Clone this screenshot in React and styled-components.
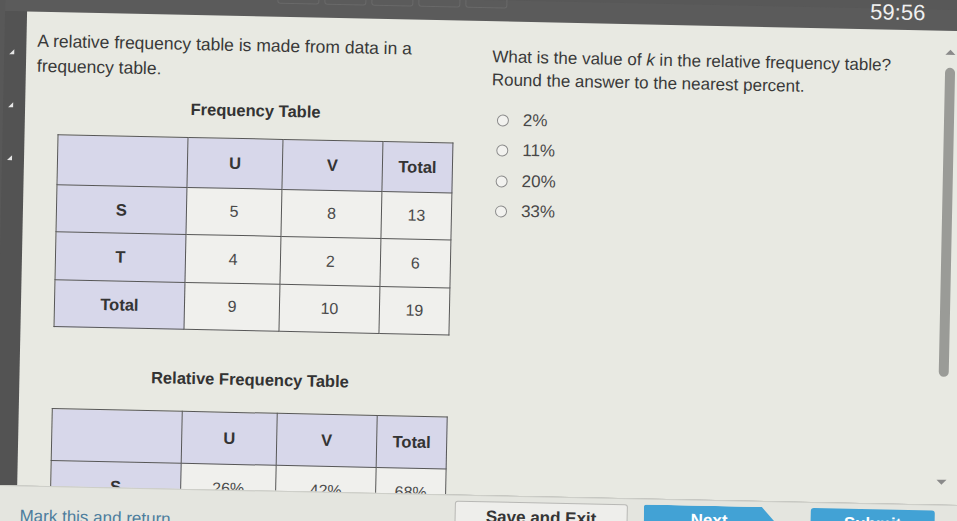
import React from "react";
import styled, { createGlobalStyle } from "styled-components";

const Global = createGlobalStyle`
  html, body { margin: 0; padding: 0; background: #585858; }
  body { font-family: "Liberation Sans", Arial, sans-serif; }
`;

/* Window that clips the slightly tilted exam screen */
const Viewport = styled.div`
  width: 957px;
  height: 521px;
  overflow: hidden;
  background: #585858;
`;

const Screen = styled.div`
  width: 967px;
  height: 541px;
  display: flex;
  flex-direction: column;
  transform: rotate(1.2deg);
  transform-origin: 478px 260px;
`;

const TopBar = styled.div`
  height: 21px;
  flex: none;
  display: flex;
  align-items: flex-start;
  padding: 0 47px 0 272px;
  background: #5b5b5b;
`;

const Tabs = styled.div`
  display: flex;
  gap: 5px;
  margin-top: -6px;
`;

const Tab = styled.div`
  width: 40px;
  height: 12px;
  border: 1px solid #696969;
  border-radius: 3px;
`;

const Timer = styled.div`
  margin: -7px 0 0 auto;
  color: #f0f0f0;
  font-size: 22px;
  line-height: 22px;
`;

const Middle = styled.div`
  height: 474px;
  flex: none;
  display: flex;
`;

const Rail = styled.div`
  width: 22px;
  flex: none;
  background: #535353;
  display: flex;
  flex-direction: column;
  gap: 48px;
  padding: 38px 0 0 5px;
  box-sizing: border-box;
`;

const RailMark = styled.div`
  width: 0;
  height: 0;
  border-left: 5px solid transparent;
  border-bottom: 5px solid #e6e6e6;
`;

const Panel = styled.div`
  flex: 1;
  display: flex;
  background: #e8e9e2;
  overflow: hidden;
  color: #393939;
`;

const LeftCol = styled.div`
  width: 448px;
  flex: none;
  padding: 17px 0 0 11px;
  box-sizing: border-box;
`;

const Para = styled.p`
  margin: 0;
  font-size: 17.5px;
  line-height: 25px;
  width: 425px;
`;

const Caption = styled.div`
  width: 395px;
  margin: ${(p) => p.$top}px 0 0 22px;
  text-align: center;
  font-weight: bold;
  font-size: 16.5px;
  line-height: 22px;
  color: #333;
`;

const Table = styled.table`
  width: 395px;
  margin: ${(p) => p.$top}px 0 0 22px;
  border-collapse: collapse;
  table-layout: fixed;
`;

const Cell = styled.td`
  border: 1.5px solid #575757;
  text-align: center;
  height: ${(p) => p.$h}px;
  padding: 0;
  background: ${(p) => (p.$head ? "#d7d7ea" : "#f0f0ed")};
  font-size: ${(p) => (p.$bold ? "16.5px" : "16px")};
  font-weight: ${(p) => (p.$bold ? "bold" : "normal")};
  color: ${(p) => (p.$bold ? "#343434" : "#4a4a4a")};
`;

const RightCol = styled.div`
  flex: 1;
  padding: 24px 0 0 18px;
`;

const Question = styled.p`
  margin: 0;
  font-size: 17px;
  line-height: 23px;
`;

const Options = styled.div`
  margin-top: 14px;
  display: flex;
  flex-direction: column;
`;

const Option = styled.label`
  height: 30.3px;
  display: flex;
  align-items: center;
  gap: 14px;
  padding-left: 6px;
  font-size: 17px;
  color: #484848;
`;

const Radio = styled.span`
  width: 10px;
  height: 10px;
  border: 1.5px solid #8b8b8b;
  border-radius: 50%;
  background: #f2f2ef;
`;

const Scroll = styled.div`
  width: 12px;
  flex: none;
  margin-right: 15px;
  display: flex;
  flex-direction: column;
  align-items: center;
  padding-top: 19px;
`;

const Arrow = styled.div`
  width: 0;
  height: 0;
  border-left: 5px solid transparent;
  border-right: 5px solid transparent;
  ${(p) =>
    p.$down
      ? "border-top: 5px solid #8a8a8a;"
      : "border-bottom: 5px solid #8a8a8a;"}
  margin-top: ${(p) => p.$mt || 0}px;
`;

const Thumb = styled.div`
  width: 10px;
  height: 309px;
  margin-top: 13px;
  border-radius: 5px;
  background: #9a9b97;
`;

const Footer = styled.div`
  flex: 1;
  display: flex;
  align-items: flex-start;
  background: #e4e5df;
  border-top: 1px solid #cdcec8;
  box-sizing: border-box;
  padding-left: 25px;
`;

const MarkLink = styled.span`
  margin-top: 20px;
  width: 435px;
  font-size: 17px;
  line-height: 20px;
  color: #4d7d9d;
`;

const Button = styled.div`
  height: 32px;
  width: ${(p) => p.$w}px;
  margin: 5px ${(p) => p.$mr}px 0 0;
  box-sizing: border-box;
  border-radius: 3px;
  text-align: center;
  font-size: 17px;
  font-weight: bold;
  line-height: 30px;
  background: ${(p) => (p.$primary ? "#42a2d5" : "#eeeeeb")};
  color: ${(p) => (p.$primary ? "#ffffff" : "#353535")};
  border: ${(p) => (p.$primary ? "none" : "1px solid #b8b8b5")};
  clip-path: ${(p) =>
    p.$arrow ? "polygon(0 0, 90% 0, 100% 45%, 100% 100%, 0 100%)" : "none"};
`;

const freq = [
  ["S", 5, 8, 13],
  ["T", 4, 2, 6],
  ["Total", 9, 10, 19],
];

const rel = [["S", "26%", "42%", "68%"]];

const widths = [130, 95, 100, 70];

function DataTable({ rows, top, head, heights }) {
  return (
    <Table $top={top}>
      <colgroup>
        {widths.map((w, i) => (
          <col key={i} style={{ width: w }} />
        ))}
      </colgroup>
      <tbody>
        <tr>
          <Cell $head $h={head} />
          <Cell $head $bold $h={head}>U</Cell>
          <Cell $head $bold $h={head}>V</Cell>
          <Cell $head $bold $h={head}>Total</Cell>
        </tr>
        {rows.map((r, i) => (
          <tr key={r[0]}>
            <Cell $head $bold $h={heights[i]}>{r[0]}</Cell>
            <Cell $h={heights[i]}>{r[1]}</Cell>
            <Cell $h={heights[i]}>{r[2]}</Cell>
            <Cell $h={heights[i]}>{r[3]}</Cell>
          </tr>
        ))}
      </tbody>
    </Table>
  );
}

export default function App() {
  return (
    <Viewport>
      <Global />
      <Screen>
        <TopBar>
          <Tabs>
            {[0, 1, 2, 3, 4].map((i) => (
              <Tab key={i} />
            ))}
          </Tabs>
          <Timer>59:56</Timer>
        </TopBar>
        <Middle>
          <Rail>
            <RailMark />
            <RailMark />
            <RailMark />
          </Rail>
          <Panel>
            <LeftCol>
              <Para>A relative frequency table is made from data in a frequency table.</Para>
              <Caption $top={16}>Frequency Table</Caption>
              <DataTable rows={freq} top={17} head={49} heights={[46, 47, 46]} />
              <Caption $top={37}>Relative Frequency Table</Caption>
              <DataTable rows={rel} top={22} head={51} heights={[48]} />
            </LeftCol>
            <RightCol>
              <Question>
                What is the value of <i>k</i> in the relative frequency table?
                <br />
                Round the answer to the nearest percent.
              </Question>
              <Options>
                {["2%", "11%", "20%", "33%"].map((o) => (
                  <Option key={o}>
                    <Radio />
                    {o}
                  </Option>
                ))}
              </Options>
            </RightCol>
            <Scroll>
              <Arrow />
              <Thumb />
              <Arrow $down $mt={103} />
            </Scroll>
          </Panel>
        </Middle>
        <Footer>
          <MarkLink>Mark this and return</MarkLink>
          <Button $w={173} $mr={16}>Save and Exit</Button>
          <Button $primary $arrow $w={131} $mr={36}>Next</Button>
          <Button $primary $w={124} $mr={0}>Submit</Button>
        </Footer>
      </Screen>
    </Viewport>
  );
}
